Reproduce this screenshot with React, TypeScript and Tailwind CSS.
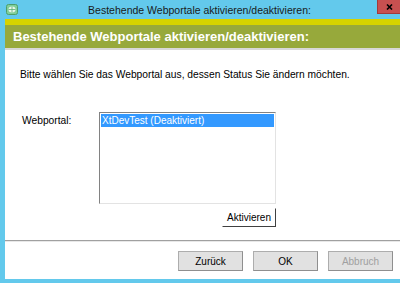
const AppIcon = () => (
  <svg width="12" height="11" viewBox="0 0 12 11">
    <rect x="0.5" y="0.5" width="11" height="10" rx="2" fill="#7fcf9a" stroke="#4e9e6b" />
    <ellipse cx="6" cy="5.5" rx="3.5" ry="3" fill="#e8f6ea" />
    <path d="M2.5 5.5h7M6 2.5v6" stroke="#5aae76" strokeWidth="0.8" />
  </svg>
);

const WinButton = ({ label, disabled }: { label: string; disabled?: boolean }) => (
  <button
    disabled={disabled}
    className={`w-[65px] h-5 bg-[#e1e1e1] border border-[#adadad] border-r-[#8f8f8f] border-b-[#8f8f8f] text-[10px] ${
      disabled ? "text-[#a0a0a0]" : "text-black"
    }`}
  >
    {label}
  </button>
);

export default function App() {
  return (
    <div className="w-[400px] h-[283px] bg-[#63c9ec] flex flex-col overflow-hidden font-['Liberation_Sans',Arial,sans-serif]">
      {/* title bar */}
      <div className="h-[19px] flex items-start shrink-0">
        <div className="pl-[6px] pt-[4px] w-[22px] shrink-0">
          <AppIcon />
        </div>
        <div className="flex-1 min-w-0 text-center text-[10.5px] leading-none pt-[5px] text-[#1a1a1a]">
          Bestehende Webportale aktivieren/deaktivieren:
        </div>
        <button className="flex w-[23px] min-w-[23px] h-[14px] bg-[#c75050] border-l border-b border-[#a23a3a] items-center justify-center">
          <svg width="7" height="6" viewBox="0 0 7 6">
            <path d="M1 0.5l5 5M6 0.5l-5 5" stroke="#000" strokeWidth="1.6" />
          </svg>
        </button>
      </div>

      {/* client area */}
      <div className="flex-1 ml-[5px] bg-white flex flex-col">
        <div className="h-[6px] bg-[#d6d300]" />
        <div className="h-[25px] bg-[#97a93b] flex items-center pl-[8px] text-white font-bold text-[13px] border-b-2 border-[#d8d8d8]">
          Bestehende Webportale aktivieren/deaktivieren:
        </div>

        <div className="flex-1 flex flex-col text-[10.25px] text-black">
          <p className="pl-[15px] pt-[18px] leading-[13px]">
            Bitte wählen Sie das Webportal aus, dessen Status Sie ändern möchten.
          </p>

          <div className="flex pt-[31px]">
            <div className="w-[94px] pl-[17px] pt-[2px] leading-[13px]">Webportal:</div>
            <div className="w-[177px] h-[92px] border border-[#828282] border-r-[#e3e3e3] border-b-[#e3e3e3] bg-white p-px">
              <div className="bg-[#3399ff] text-white text-[10px] h-[13px] leading-[13px] px-px">XtDevTest (Deaktiviert)</div>
            </div>
          </div>

          <div className="flex justify-end pr-[124px] pt-[4px]">
            <button className="w-[54px] h-[19px] bg-white border border-white border-r-[#404040] border-b-[#404040] text-[10px] leading-none">
              Aktivieren
            </button>
          </div>

          <div className="mt-auto h-[2px] bg-[#a0a0a0] border-b border-[#e8e8e8]" />
          <div className="h-[37px] flex items-start justify-end gap-[10px] pr-[7px] pt-[9px]">
            <WinButton label="Zurück" />
            <WinButton label="OK" />
            <WinButton label="Abbruch" disabled />
          </div>
        </div>
      </div>
      <div className="h-[4px] shrink-0" />
    </div>
  );
}
